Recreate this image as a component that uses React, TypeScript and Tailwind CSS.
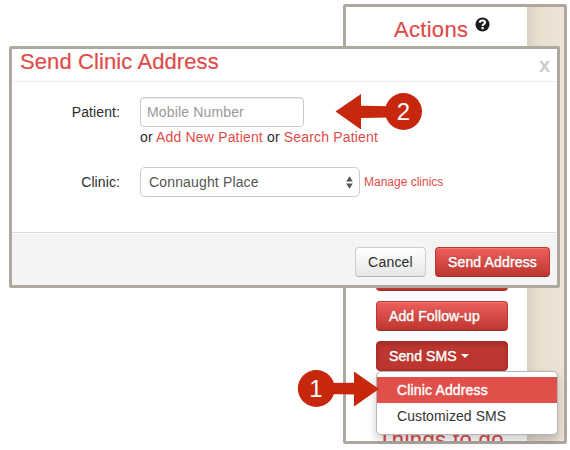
import { ReactNode } from "react";
import clsx from "clsx";

function ActionButton({ children, active }: { children?: ReactNode; active?: boolean }) {
  return (
    <button
      className={clsx(
        "flex h-[30px] w-[132px] shrink-0 items-center rounded-[4px] border px-[12px] text-[14px] leading-5 tracking-[0.1px] text-white [-webkit-text-stroke:0.4px_white] [text-shadow:0_-1px_0_rgba(0,0,0,0.25)]",
        active
          ? "border-[#ab2d29] bg-[#bd362f] shadow-[inset_0_2px_4px_rgba(0,0,0,0.2)]"
          : "border-[#bd362f] border-b-[#9a2a26] bg-linear-to-b from-[#ee5f5b] to-[#bd362f] shadow-[inset_0_1px_0_rgba(255,255,255,0.15)]"
      )}
    >
      {children}
    </button>
  );
}

function ActionsPanel() {
  return (
    <div className="absolute top-[4px] left-[343px] flex h-[440px] w-[224px] overflow-hidden rounded-[2px] border-3 border-[#aea99f]">
      <div className="flex w-[181px] shrink-0 flex-col bg-white pl-[30px]">
        <div className="flex h-[254px] shrink-0 items-start pt-[10px] pl-[18px]">
          <h2 className="text-[22px] leading-[26px] tracking-[0.3px] text-[#df4b48] [-webkit-text-stroke:0.2px_#df4b48]">
            Actions
          </h2>
          <svg className="ml-[7px]" width="15" height="15" viewBox="0 0 15 15">
            <circle cx="7.5" cy="7.5" r="7" fill="#1c1c1c" />
            <path
              d="M4.7 5.6C4.9 4 6 3.5 7.5 3.5C9 3.5 10 4.3 10 5.5C10 7.2 7.6 7 7.6 8.9"
              fill="none"
              stroke="#fff"
              strokeWidth="2.1"
            />
            <rect x="6.5" y="10" width="2.2" height="2.2" fill="#fff" />
          </svg>
        </div>
        <div className="flex shrink-0 flex-col gap-[10px]">
          <ActionButton />
          <ActionButton>Add Follow-up</ActionButton>
          <ActionButton active>
            Send SMS
            <span className="ml-[4px] h-0 w-0 border-x-4 border-t-4 border-x-transparent border-t-white" />
          </ActionButton>
          <ActionButton />
        </div>
        <h2 className="mt-[16px] shrink-0 pl-[2px] text-[22px] leading-[26px] whitespace-nowrap tracking-[0.4px] text-[#df4b48] [-webkit-text-stroke:0.2px_#df4b48]">
          Things to do
        </h2>
      </div>
      <div className="flex-1 bg-linear-to-r from-[#d9d0c2] via-[#e7dece] via-30% to-[#ece4d7]" />
    </div>
  );
}

function SmsMenu() {
  return (
    <div className="absolute top-[371px] left-[376px] h-[64px] w-[182px] rounded-[5px] border border-[#b5b5b5] bg-white py-[5px] text-[14px] shadow-[0_5px_10px_rgba(0,0,0,0.2)]">
      <div className="flex h-[26px] items-center bg-[#e04f49] pl-[20px] tracking-[0.15px] text-white [-webkit-text-stroke:0.4px_white]">
        Clinic Address
      </div>
      <div className="flex h-[26px] items-center pl-[20px] tracking-[0.08px] text-[#333]">Customized SMS</div>
    </div>
  );
}

function ClinicModal() {
  return (
    <div className="absolute top-[46px] left-[9px] flex h-[242px] w-[551px] flex-col rounded-[2px] border-3 border-[#aea99f] bg-white text-[14px] leading-5 text-[#2b2b2b]">
      <div className="flex h-[33px] shrink-0 items-start justify-between border-b border-[#eee] pr-[7px] pl-[8px]">
        <h2 className="text-[22px] leading-[26px] tracking-[0.1px] text-[#df4b48] [-webkit-text-stroke:0.2px_#df4b48]">
          Send Clinic Address
        </h2>
        <button className="mt-[5px] text-[20px] leading-[22px] font-bold text-[#ccc]">x</button>
      </div>
      <div className="flex flex-1 flex-col">
        <div className="mt-[15px] flex">
          <label className="w-[108px] pt-[5px] text-right tracking-[0.1px]">Patient:</label>
          <div className="ml-[20px]">
            <div className="flex h-[30px] w-[164px] items-center rounded-[4px] border border-[#ccc] pl-[6px] tracking-[0.15px] text-[#999] shadow-[inset_0_1px_1px_rgba(0,0,0,0.075)]">
              Mobile Number
            </div>
            <p className="tracking-[0.17px]">
              or <a className="text-[#df4b48]">Add New Patient</a> or <a className="text-[#df4b48]">Search Patient</a>
            </p>
          </div>
        </div>
        <div className="mt-[20px] flex">
          <label className="w-[108px] pt-[5px] text-right tracking-[0.1px]">Clinic:</label>
          <div className="ml-[20px] flex h-[30px] w-[220px] items-center justify-between rounded-[5px] border border-[#ccc] pr-[6px] pl-[8px] tracking-[0.15px] text-[#555]">
            Connaught Place
            <svg width="7" height="13" viewBox="0 0 7 13" fill="#555">
              <path d="M3.5 0.3L6.8 5.5H0.2Z" />
              <path d="M3.5 12.7L6.8 7.5H0.2Z" />
            </svg>
          </div>
          <a className="ml-[4px] pt-[5px] text-[12px] text-[#df4b48]">Manage clinics</a>
        </div>
      </div>
      <div className="flex h-[53px] shrink-0 justify-end gap-[9px] border-t border-[#ddd] bg-[#f4f4f4] pt-[14px] pr-[7px] shadow-[inset_0_1px_0_white]">
        <button className="h-[30px] w-[71px] rounded-[4px] border border-[#ccc] border-b-[#b3b3b3] bg-linear-to-b from-white to-[#e6e6e6] tracking-[0.2px]">
          Cancel
        </button>
        <button className="h-[30px] w-[115px] rounded-[4px] border border-[#bd362f] border-b-[#9a2a26] bg-linear-to-b from-[#ee5f5b] to-[#bd362f] tracking-[0.15px] text-white shadow-[inset_0_1px_0_rgba(255,255,255,0.15)] [-webkit-text-stroke:0.4px_white] [text-shadow:0_-1px_0_rgba(0,0,0,0.25)]">
          Send Address
        </button>
      </div>
    </div>
  );
}

// Numbered arrows that walk through the two steps
function StepMarkers() {
  return (
    <svg
      className="pointer-events-none absolute inset-0"
      width="570"
      height="450"
      viewBox="0 0 570 450"
      fill="#c7270d"
      fontFamily="Liberation Sans, Arial, sans-serif"
      fontSize="24"
      textAnchor="middle"
    >
      <path d="M335.5 111.5L361 94V105.8L390 106.2V117.6L361 118V129.5Z" />
      <circle cx="403.5" cy="111.5" r="18.5" />
      <text x="403.5" y="120" fill="#fff">2</text>
      <path d="M379 389L354 371.5V382.8L325 383V394L354 394.5V406.5Z" />
      <circle cx="316.3" cy="388.5" r="18.5" />
      <text x="316" y="397" fill="#fff">1</text>
    </svg>
  );
}

export default function App() {
  return (
    <div className="relative h-[450px] w-[570px] overflow-hidden bg-white font-['Liberation_Sans',Arial,sans-serif]">
      <ActionsPanel />
      <ClinicModal />
      <SmsMenu />
      <StepMarkers />
    </div>
  );
}
